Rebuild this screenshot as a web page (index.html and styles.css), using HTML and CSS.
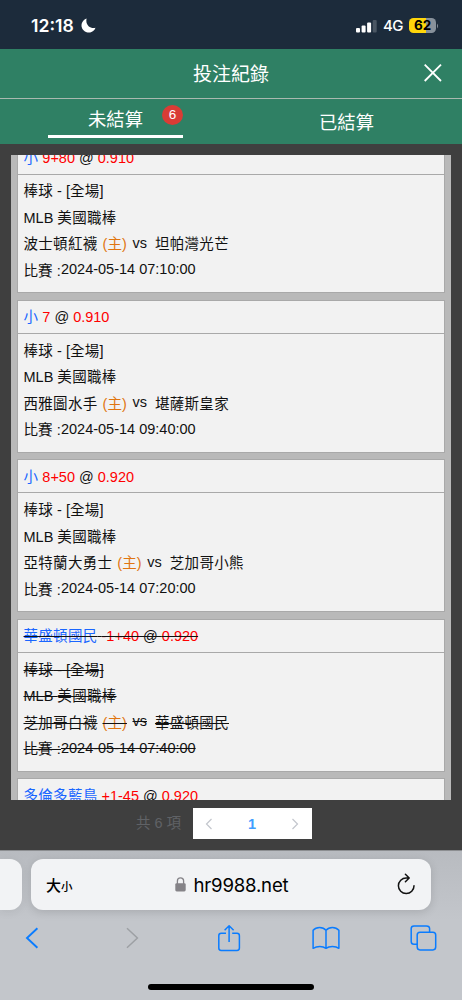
FILE: index.html
```
<!DOCTYPE html>
<html lang="zh-Hant">
<head>
<meta charset="utf-8">
<meta name="viewport" content="width=device-width, initial-scale=1">
<title>投注紀錄</title>
<link rel="stylesheet" href="styles.css">
</head>
<body>
<div class="phone">
  <div class="status">
    <span class="clock">12:18</span>
    <svg class="moon" width="15" height="15" viewBox="0 0 15 15"><path d="M5.6.5A7.2 7.2 0 1 0 14.5 9.8C10 11.2 4 7.5 5.6.5Z" fill="#fff"/></svg>
    <svg class="signal" width="21" height="14" viewBox="0 0 21 14"><rect x="0" y="9" width="4" height="4.5" rx="1" fill="#fff"/><rect x="5.6" y="6.5" width="4" height="7" rx="1" fill="#fff"/><rect x="11.1" y="3.5" width="4" height="10" rx="1" fill="#fff"/><rect x="16.7" y="1" width="4" height="12.5" rx="1" fill="#4a5663"/></svg>
    <span class="net">4G</span>
    <div class="battery"><span>62</span></div>
    <svg class="nub" width="2" height="6" viewBox="0 0 2 6"><path d="M0 .5Q2 3 0 5.5Z" fill="#87919b"/></svg>
  </div>
  <header class="title">
    <h1>投注紀錄</h1>
    <svg class="close" width="20" height="20" viewBox="0 0 20 20"><path d="M1.7 1.7 18 18M18 1.7 1.7 18" stroke="#fff" stroke-width="1.8"/></svg>
  </header>
  <nav class="tabs">
    <div class="tab active"><span>未結算</span><b class="badge">6</b></div>
    <div class="tab"><span>已結算</span></div>
  </nav>
  <main class="panel">
    <div class="list">
      <article class="card">
        <div class="bet"><span class="pick">小</span><span class="odds">9+80</span><span class="at">@</span><span class="odds">0.910</span></div>
        <div class="info">
          <p><span class="zh">棒球</span><span class="mid">- [<span class="zh">全場</span>]</span></p>
          <p><span>MLB</span><span class="zh league">美國職棒</span></p>
          <p><span class="zh">波士頓紅襪</span><span class="home">(主)</span><span class="vs">vs</span><span class="zh">坦帕灣光芒</span></p>
          <p><span class="label">比賽 :</span><span class="time">2024-05-14 07:10:00</span></p>
        </div>
      </article>
      <article class="card">
        <div class="bet"><span class="pick">小</span><span class="odds">7</span><span class="at">@</span><span class="odds">0.910</span></div>
        <div class="info">
          <p><span class="zh">棒球</span><span class="mid">- [<span class="zh">全場</span>]</span></p>
          <p><span>MLB</span><span class="zh league">美國職棒</span></p>
          <p><span class="zh">西雅圖水手</span><span class="home">(主)</span><span class="vs">vs</span><span class="zh">堪薩斯皇家</span></p>
          <p><span class="label">比賽 :</span><span class="time">2024-05-14 09:40:00</span></p>
        </div>
      </article>
      <article class="card">
        <div class="bet"><span class="pick">小</span><span class="odds">8+50</span><span class="at">@</span><span class="odds">0.920</span></div>
        <div class="info">
          <p><span class="zh">棒球</span><span class="mid">- [<span class="zh">全場</span>]</span></p>
          <p><span>MLB</span><span class="zh league">美國職棒</span></p>
          <p><span class="zh">亞特蘭大勇士</span><span class="home">(主)</span><span class="vs">vs</span><span class="zh">芝加哥小熊</span></p>
          <p><span class="label">比賽 :</span><span class="time">2024-05-14 07:20:00</span></p>
        </div>
      </article>
      <article class="card void">
        <div class="bet"><s><span class="pick">華盛頓國民</span> <span class="odds">-1+40</span> @ <span class="odds">0.920</span></s></div>
        <div class="info">
          <p><s><span class="zh">棒球</span> - [<span class="zh">全場</span>]</s></p>
          <p><s>MLB <span class="zh">美國職棒</span></s></p>
          <p><s class="zh">芝加哥白襪</s><s class="home">(主)</s><s class="vs">vs</s><s class="zh">華盛頓國民</s></p>
          <p><s class="label">比賽 :</s><s class="time">2024-05-14 07:40:00</s></p>
        </div>
      </article>
      <article class="card">
        <div class="bet"><span class="pick">多倫多藍鳥</span><span class="odds">+1-45</span><span class="at">@</span><span class="odds">0.920</span></div>
        <div class="info"></div>
      </article>
    </div>
    <div class="pager">
      <span class="total">共 6 項</span>
      <div class="pages">
        <svg width="8" height="12" viewBox="0 0 8 12"><path d="M6.5 1 1.5 6l5 5" fill="none" stroke="#c3c6cd" stroke-width="1.2"/></svg>
        <b>1</b>
        <svg width="8" height="12" viewBox="0 0 8 12"><path d="M1.5 1l5 5-5 5" fill="none" stroke="#c3c6cd" stroke-width="1.2"/></svg>
      </div>
    </div>
  </main>
  <footer class="browser">
    <div class="address-row">
      <div class="previous"></div>
      <div class="address">
        <span class="size">大<small>小</small></span>
        <span class="url"><svg width="11" height="15" viewBox="0 0 11 15"><path d="M2.4 7V4a3.1 3.1 0 0 1 6.2 0v3" fill="none" stroke="#858388" stroke-width="1.3"/><rect x=".3" y="6.2" width="10.4" height="8.3" rx="1.4" fill="#858388"/></svg>hr9988.net</span>
        <svg class="reload" width="19" height="22" viewBox="0 0 19 22" fill="none" stroke="#111" stroke-width="1.5" stroke-linecap="round" stroke-linejoin="round"><path d="M11.6 5H9.3A7.8 7.8 0 1 0 17 12.7M8.4 1.2 12.2 5 8.4 8.8"/></svg>
      </div>
    </div>
    <div class="tools">
      <svg width="14" height="22" viewBox="0 0 14 22"><path d="M12.4 1.2 2 11l10.4 9.8" fill="none" stroke="#0a7cff" stroke-width="1.9"/></svg>
      <svg width="14" height="22" viewBox="0 0 14 22"><path d="M2 1.2 12.4 11 2 20.8" fill="none" stroke="#9da0a4" stroke-width="1.5"/></svg>
      <svg width="24" height="28" viewBox="0 0 24 28" fill="none" stroke="#0a7cff" stroke-width="1.5" stroke-linejoin="round"><path d="M9 9.3H4.2Q1.8 9.3 1.8 11.7V24Q1.8 26.4 4.2 26.4H20Q22.4 26.4 22.4 24V11.7Q22.4 9.3 20 9.3H15.2M12.1 18V1.8M7.6 6.2 12.1 1.8l4.5 4.4"/></svg>
      <svg width="28" height="24" viewBox="0 0 28 24" fill="none" stroke="#0a7cff" stroke-width="1.5" stroke-linejoin="round"><path d="M14 4.2V22.3Q11.5 20.4 7.8 20.4T1.1 22.3V4.2Q3.5 1.4 7.6 1.4T14 4.2Q16.4 1.4 20.4 1.4T26.9 4.2V22.3Q24.5 20.4 20.4 20.4T14 22.3"/></svg>
      <svg width="27" height="26" viewBox="0 0 27 26" fill="none" stroke="#0a7cff" stroke-width="1.5"><path d="M7.2 19.2H4Q1.2 19.2 1.2 16.4V3.6Q1.2.9 4 .9H16.4Q19.6.9 19.6 3.6V7.2"/><rect x="7.2" y="7.2" width="18.5" height="17.7" rx="2.8"/></svg>
    </div>
    <div class="home-bar"></div>
  </footer>
</div>
</body>
</html>
```
FILE: styles.css
```
* { box-sizing: border-box; }
body { margin: 0; background: #3f3f3f; }
svg { display: block; flex: none; }
.phone {
  width: 462px; height: 1000px; overflow: hidden;
  display: flex; flex-direction: column;
  font-family: "Liberation Sans", "Noto Sans CJK TC", sans-serif;
}
.status {
  height: 49px; flex: none; display: flex; align-items: center;
  padding: 2px 24px 0 31px; background: #1c2b3b; color: #fff;
  font-family: Inter, sans-serif;
}
.clock { font-size: 17.6px; font-weight: 600; width: 50px; white-space: nowrap; }
.moon { margin-top: -1px; }
.signal { margin-left: auto; }
.net { margin-left: 6px; width: 26px; font-size: 15px; font-weight: 500; letter-spacing: -.5px; }
.battery {
  width: 27px; height: 15px; border-radius: 4.5px; flex: none;
  background: linear-gradient(90deg, #ffd60a 62%, #87919b 62%);
  color: #000; font-size: 13.5px; line-height: 15px; font-weight: 700; text-align: center; letter-spacing: -.2px;
}
.nub { margin-left: 1px; margin-right: -1px; }
.title {
  height: 50px; flex: none; display: flex; align-items: center; justify-content: center;
  position: relative; background: #2f8064; border-bottom: 1px solid #a9b9b0; color: #fff;
}
.title h1 { margin: 0; padding-top: 2px; font-size: 19px; font-weight: 400; line-height: 28px; }
.close { position: absolute; right: 19px; top: 14px; }
.tabs { height: 45px; flex: none; display: flex; background: #2f8064; color: #fff; }
.tab { flex: 1; text-align: center; font-size: 18.3px; line-height: 44px; padding-top: 2px; }
.active {
  position: relative; flex: none; width: 135px; height: 39px; margin: 0 48px;
  border-bottom: 3px solid #fff; line-height: 37px;
}
.badge {
  position: absolute; right: 0; top: 6px; width: 21px; height: 20px; border-radius: 50%;
  background: #d93c35; font: 400 13.5px/20px "Liberation Sans", sans-serif;
}
.panel { height: 706px; flex: none; padding: 11px 11px 0; background: #3f3f3f; }
.list {
  height: 645px; overflow: hidden; padding: 0 6px; background: #b9b9b9;
  display: flex; flex-direction: column; gap: 6.2px;
}
.card {
  height: 153.3px; flex: none; border: 1px solid #a9a9a9; background: #f2f2f2;
  font-size: 14.5px; color: #111;
}
.card:first-child { margin-top: -14.9px; }
.bet {
  height: 33.4px; border-bottom: 1px solid #a9a9a9; padding: 1px 5.5px 0;
  display: flex; align-items: center; gap: 4px; line-height: 20px; white-space: pre;
}
.pick { color: #1a66ff; letter-spacing: .3px; }
.odds { color: #f00; }
.info { padding: 3.7px 5.5px; }
.info p { margin: 0; height: 26.5px; display: flex; align-items: center; line-height: 20px; white-space: pre; }
.zh { letter-spacing: .3px; }
.label { letter-spacing: .1px; }
.mid { margin-left: 4px; }
.league { margin-left: 4px; }
.home { color: #e07510; margin-left: 5px; letter-spacing: .1px; }
s { text-decoration-color: #111; }
.vs { margin: 0 8px 3px 5.5px; }
.time { margin-bottom: 3px; }
.pager { height: 50px; display: flex; padding: 8px 0 0 125px; gap: 11px; }
.total { width: 46px; font-size: 14.5px; line-height: 30px; color: #606266; white-space: nowrap; }
.pages {
  width: 119px; height: 31px; padding: 0 13px 0 12px; background: #fff;
  display: flex; align-items: center; justify-content: space-between;
}
.pages b { font-size: 14.5px; color: #409eff; }
.browser {
  height: 150px; flex: none; background: linear-gradient(#b8bbc0, #c3c6cb 70px);
  border-top: 1px solid #8c8e91; display: flex; flex-direction: column;
}
.address-row { display: flex; gap: 9px; padding-top: 8px; }
.previous { width: 22px; height: 51px; background: #f2f3f5; border-radius: 0 12px 12px 0; box-shadow: 0 2px 10px #0001; }
.address {
  width: 400px; height: 51px; border-radius: 12px; background: #f2f3f5; box-shadow: 0 2px 10px #0002;
  display: flex; align-items: center; padding: 0 15px; font-family: Inter, "Noto Sans CJK TC", sans-serif;
}
.size { font-size: 15px; font-weight: 500; width: 129px; white-space: nowrap; }
.size small { font-size: 11.5px; }
.url { display: flex; align-items: center; gap: 7.5px; font-size: 18.6px; letter-spacing: -.2px; }
.reload { margin-left: auto; margin-top: -2px; }
.tools { height: 56px; display: grid; grid-template-columns: 100px 91.5px 95.5px 98px 27px; align-items: center; padding-left: 25px; }
.home-bar { width: 166px; height: 6px; border-radius: 3px; background: #000; margin: 18px auto 0 148px; }
```
